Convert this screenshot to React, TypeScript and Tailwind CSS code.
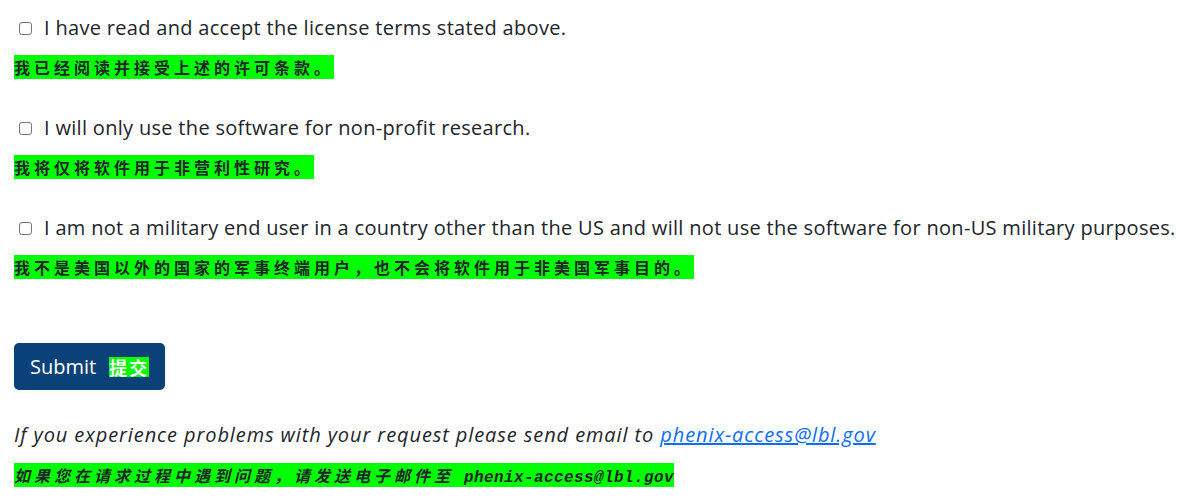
import React from 'react';

const latin = "font-['Segoe_UI','Open_Sans',sans-serif]";
const cjk = "font-['Noto_Sans_CJK_SC',sans-serif]";

const items = [
  {
    en: 'I have read and accept the license terms stated above.',
    zh: '我已经阅读并接受上述的许可条款。',
  },
  {
    en: 'I will only use the software for non-profit research.',
    zh: '我将仅将软件用于非营利性研究。',
  },
  {
    en: 'I am not a military end user in a country other than the US and will not use the software for non-US military purposes.',
    zh: '我不是美国以外的国家的军事终端用户，也不会将软件用于非美国军事目的。',
  },
];

const Zh: React.FC<{ children: React.ReactNode; italic?: boolean }> = ({ children, italic }) => (
  <span
    className={`${cjk} bg-[#00ff00] text-[16px] font-bold leading-[21px] tracking-[4px] text-[#212529] ${
      italic ? 'italic' : ''
    }`}
  >
    {children}
  </span>
);

export default function App() {
  return (
    <div className={`${latin} bg-white px-[14px] pt-[14px] text-[#212529]`}>
      <div className="flex flex-col gap-[35px]">
        {items.map((item) => (
          <div key={item.en}>
            <label className="flex items-center gap-[12px] pl-[5px] text-[20px] leading-[28px]">
              <span className="h-[13px] w-[13px] shrink-0 rounded-[3px] border border-[#767676] bg-white" />
              <span className="tracking-[0.31px]">{item.en}</span>
            </label>
            <p className="mt-[15px] leading-[21px]">
              <Zh>{item.zh}</Zh>
            </p>
          </div>
        ))}
      </div>

      <div className="mt-[64px]">
        <button className="flex h-[47px] items-center gap-[13px] rounded-[5px] bg-[#0b4179] pl-[16px] pr-[16px] text-[20px] font-medium text-white">
          Submit
          <span className={`${cjk} bg-[#00ff00] text-[18px] font-bold leading-[20px] tracking-[2px] text-white`}>提交</span>
        </button>
      </div>

      <p className="mt-[31px] text-[20px] italic leading-[28px] tracking-[0.9px]">
        If you experience problems with your request please send email to{' '}
        <a href="#" className="text-[#0d6efd] underline">
          phenix-access@lbl.gov
        </a>
      </p>
      <p className="mt-[16px] leading-[21px]">
        <Zh italic>
          如果您在请求过程中遇到问题，请发送电子邮件至
          <span className="font-['Liberation_Mono',monospace] text-[16px] tracking-[0.4px]"> phenix-access@lbl.gov</span>
        </Zh>
      </p>
    </div>
  );
}
